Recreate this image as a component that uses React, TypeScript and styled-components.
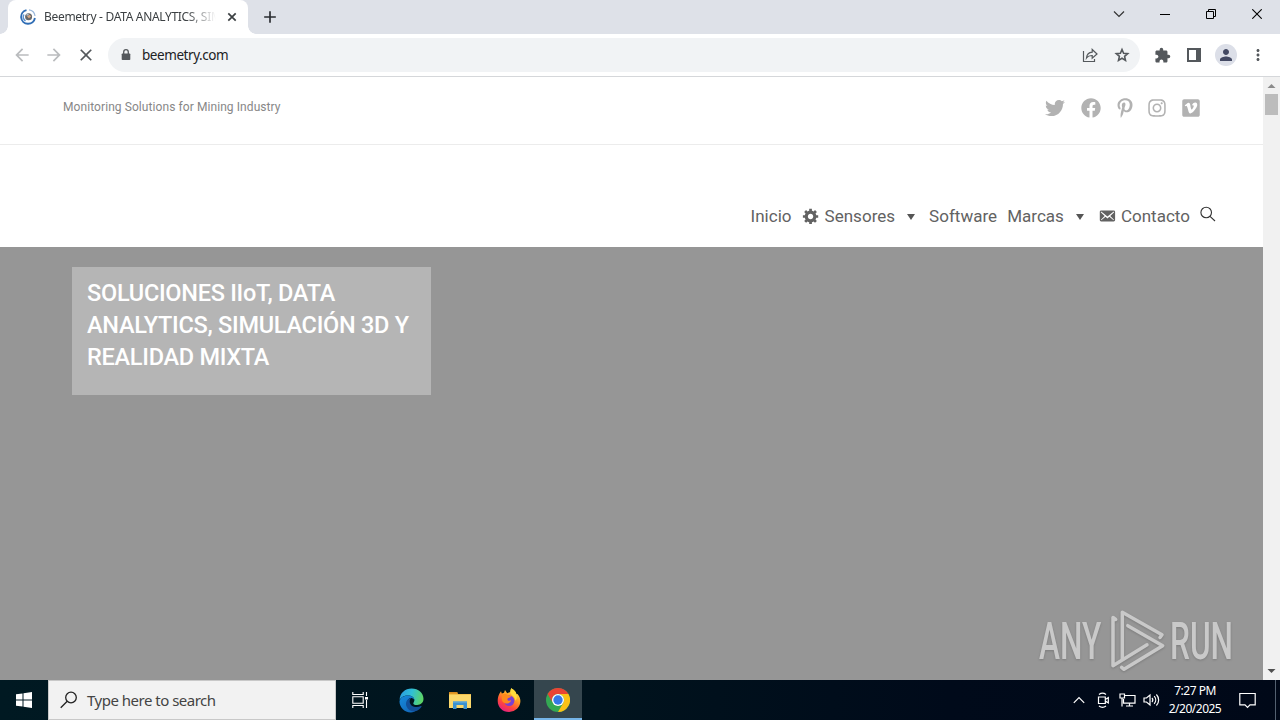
import React from 'react';
import styled, { createGlobalStyle } from 'styled-components';
import { FaTwitter, FaFacebook, FaPinterestP, FaInstagram, FaVimeoSquare } from 'react-icons/fa';
import { MdArrowBack, MdArrowForward, MdClose, MdExtension, MdPerson, MdMoreVert, MdAdd } from 'react-icons/md';

const Global = createGlobalStyle`
  * { box-sizing: border-box; }
  body { margin: 0; width: 1280px; height: 720px; overflow: hidden; background: #fff; }
  svg { display: block; flex: none; }
`;

const Screen = styled.div`
  width: 1280px;
  height: 720px;
  display: flex;
  flex-direction: column;
  overflow: hidden;
  font-family: 'Noto Sans', 'Open Sans', sans-serif;
`;

const TabStrip = styled.header`
  height: 34px;
  flex: none;
  display: flex;
  background: #dee1e8;
  padding-left: 8px;
`;
const Tab = styled.div`
  width: 240px;
  height: 34px;
  display: flex;
  align-items: center;
  padding: 0 9px 0 12px;
  background: #fff;
  border-radius: 8px 8px 0 0;
  position: relative;
  &::before, &::after {
    content: '';
    position: absolute;
    bottom: 0;
    width: 8px;
    height: 8px;
  }
  &::before { left: -8px; background: radial-gradient(circle at 0 0, transparent 7.5px, #fff 8px); }
  &::after { right: -8px; background: radial-gradient(circle at 100% 0, transparent 7.5px, #fff 8px); }
`;
const TabTitle = styled.div`
  width: 178px;
  margin-left: 8px;
  white-space: nowrap;
  font-size: 12px;
  line-height: 18px;
  letter-spacing: -0.31px;
  color: #3c4043;
  mask-image: linear-gradient(90deg, #000 142px, transparent 172px);
`;
const TabClose = styled.div`
  margin-left: auto;
  color: #3c4043;
`;
const NewTab = styled.div`
  display: flex;
  align-items: center;
  margin-left: 12px;
  color: #2a2d31;
`;
const WindowButtons = styled.div`
  display: flex;
  align-items: center;
  height: 28px;
  margin-left: auto;
`;
const WindowButton = styled.div`
  width: 46px;
  display: flex;
  justify-content: center;
`;

const Toolbar = styled.div`
  height: 43px;
  flex: none;
  display: flex;
  align-items: center;
  background: #fff;
  border-bottom: 1px solid #d5d7da;
  padding: 0 6px;
`;
const ToolButton = styled.div<{ $color?: string }>`
  width: 32px;
  display: flex;
  justify-content: center;
  color: ${(p) => p.$color ?? '#54585c'};
`;
const NavButtons = styled.div`
  display: flex;
  flex: none;
  width: 102px;
`;
const AddressBar = styled.div`
  flex: 1;
  height: 34px;
  border-radius: 17px;
  background: #f1f3f5;
  display: flex;
  align-items: center;
  padding: 0 2px 0 13px;
  color: #54585c;
`;
const Address = styled.div`
  flex: 1;
  margin-left: 11px;
  font-size: 13.5px;
  letter-spacing: -0.44px;
  color: #202124;
`;
const ToolActions = styled.div`
  display: flex;
  flex: none;
  align-items: center;
  margin-left: 6px;
`;
const Avatar = styled.div`
  width: 22px;
  height: 22px;
  border-radius: 50%;
  background: #dcdfe8;
  display: flex;
  align-items: center;
  justify-content: center;
  color: #434963;
`;

const Viewport = styled.div`
  height: 603px;
  flex: none;
  display: flex;
`;
const Page = styled.main`
  width: 1263px;
  display: flex;
  flex-direction: column;
  font-family: Roboto, sans-serif;
`;
const TopBar = styled.div`
  height: 68px;
  flex: none;
  display: flex;
  justify-content: space-between;
  padding: 0 63px 0 63px;
  border-bottom: 1px solid #ececec;
`;
const Tagline = styled.div`
  padding-top: 21px;
  font-size: 12px;
  line-height: 18px;
  letter-spacing: 0.08px;
  color: #878787;
`;
const Socials = styled.div`
  display: flex;
  height: 61px;
  align-items: center;
  gap: 16px;
  color: #b2b2b2;
`;
const SocialLink = styled.div<{ $w: number }>`
  width: ${(p) => p.$w}px;
  display: flex;
  justify-content: center;
`;
const MenuBar = styled.nav`
  height: 102px;
  flex: none;
  display: flex;
  justify-content: flex-end;
  padding: 58px 47px 0 0;
`;
const MenuItem = styled.div`
  display: flex;
  align-items: center;
  height: 24px;
  margin-left: 10px;
  padding-top: 1px;
  font-size: 17px;
  letter-spacing: 0.02px;
  color: #626262;
`;
const MenuIcon = styled.svg`
  width: 18px;
  height: 18px;
  margin: 0 5px 0 0;
`;
const Caret = styled.span`
  margin: 2px 4px 0 12px;
  border: 4px solid transparent;
  border-top: 6px solid #555;
  border-bottom: 0;
`;
const SearchIcon = styled.svg`
  margin: 3px 0 0 10px;
`;
const Hero = styled.section`
  flex: 1;
  display: flex;
  flex-direction: column;
  justify-content: space-between;
  background: #969696;
  padding: 20px 31px 8px 72px;
`;
const HeroCard = styled.div`
  width: 359px;
  height: 128px;
  background: #b5b5b5;
  padding: 10px 15px;
`;
const HeroTitle = styled.h2`
  margin: 0;
  font-size: 23.5px;
  letter-spacing: -0.27px;
  font-weight: 500;
  line-height: 32px;
  color: #fff;
  white-space: nowrap;
`;
const Watermark = styled.div`
  align-self: flex-end;
  display: flex;
  align-items: center;
  height: 62px;
  color: #c9c9c9;
  filter: drop-shadow(0 1px 1px rgba(90, 90, 90, 0.45));
`;
const WatermarkWord = styled.div<{ $w: number; $scale: number }>`
  width: ${(p) => p.$w}px;
  font-size: 51px;
  line-height: 64px;
  padding-top: 2px;
  font-weight: 500;
  white-space: nowrap;
  transform: scaleX(${(p) => p.$scale});
  transform-origin: left center;
`;
const Scrollbar = styled.div`
  width: 17px;
  display: flex;
  flex-direction: column;
  align-items: center;
  background: #f1f1f1;
`;
const ScrollArrow = styled.svg`
  width: 17px;
  height: 17px;
`;
const Thumb = styled.div`
  width: 13px;
  height: 21px;
  background: #bcbcbc;
  margin-bottom: auto;
`;

const Taskbar = styled.footer`
  height: 40px;
  flex: none;
  display: flex;
  background: linear-gradient(90deg, #001922 0, #00131d 600px, #000a1a 950px, #000818 1280px);
`;
const TaskSlot = styled.div<{ $active?: boolean; $w?: number }>`
  width: ${(p) => p.$w ?? 49}px;
  height: 40px;
  display: flex;
  align-items: center;
  justify-content: center;
  background: ${(p) => (p.$active ? '#35464e' : 'transparent')};
  border-bottom: ${(p) => (p.$active ? '2px solid #76b5e8' : '0')};
  padding-top: ${(p) => (p.$active ? 2 : 0)}px;
`;
const SearchBox = styled.div`
  width: 288px;
  height: 40px;
  display: flex;
  align-items: center;
  padding-left: 11px;
  background: #f2f2f2;
  border: 1px solid #c8c8c8;
`;
const SearchHint = styled.span`
  margin-left: 9px;
  font-size: 15px;
  letter-spacing: -0.5px;
  color: #444;
`;
const Tray = styled.div`
  display: flex;
  align-items: center;
  margin-left: auto;
  color: #fff;
`;
const TrayIcon = styled.div`
  width: 24px;
  display: flex;
  justify-content: center;
`;
const Clock = styled.div`
  width: 64px;
  text-align: center;
  font-size: 12px;
  line-height: 18px;
  letter-spacing: -0.5px;
  white-space: nowrap;
`;
const ActionCenter = styled.div`
  width: 40px;
  display: flex;
  justify-content: center;
`;
const ShowDesktop = styled.div`
  width: 5px;
  height: 40px;
  margin-left: 8px;
  border-left: 1px solid #536070;
`;

const SiteIcon = () => (
  <svg width="16" height="16" viewBox="0 0 16 16" fill="none">
    <path d="M6.500 1.200A6.900 6.900 0 1 0 14.900 9" stroke="#2f6db5" strokeWidth="1.900" />
    <path d="M9 .9A7 7 0 0 1 15 7" stroke="#9bb9dc" strokeWidth="1.200" />
    <path d="M3.900 5.500A5 5 0 0 0 5.500 12" stroke="#5a91d0" strokeWidth="1.500" />
    <circle cx="8.600" cy="7.700" r="3.500" fill="#66686b" />
    <path d="M7 7.200l2.700-1.500 1.400 1.700-2.200 1.800z" fill="#d8a884" />
    <path d="M6 5.700l2-1 1 1-2 1z" fill="#b9c8d8" />
  </svg>
);

const EdgeIcon = () => (
  <svg width="25" height="25" viewBox="0 0 25 25">
    <defs>
      <linearGradient id="edgeTop" x1="0" x2="1" y1=".2" y2=".4">
        <stop offset="0" stopColor="#299be2" />
        <stop offset=".5" stopColor="#30bfd6" />
        <stop offset="1" stopColor="#5cd465" />
      </linearGradient>
      <linearGradient id="edgeLow" x1="0" x2=".8" y1="0" y2="1">
        <stop offset="0" stopColor="#168bdc" />
        <stop offset="1" stopColor="#1266b8" />
      </linearGradient>
    </defs>
    <path d="M.6 12C.8 5 6 .5 12.6.5 19.5.5 24.5 5.300 24.500 10.800c0 4-3 6.200-6.300 6.200-3 0-4.300-1-3.800-2.100.5-1.100 1-1.600 1-2.900 0-2.700-2.900-4.600-6.400-4.600C5 7.400 1.700 9.500.6 12z" fill="url(#edgeTop)" />
    <path d="M.5 13C1.400 9.600 4.700 7.400 9 7.400c3.500 0 6.400 1.900 6.400 4.600-1-1.300-2.200-1.900-3.600-1.900-2.300 0-3.700 2.300-3.700 4.600 0 4.700 4.500 8 9.800 6.900-1.700 1.900-3.700 2.900-6.100 2.900C5.300 24.500.3 19 .5 13z" fill="url(#edgeLow)" />
    <path d="M11 10.200c-4 1.400-4.600 5.300-3.400 8.300 1.700 4.200 6.100 5.700 9.700 4.500 2.300-.8 4-2.400 5.200-4.300.3-.5-.1-.8-.6-.6-5.200 2.200-11.200.2-11.200-4.700 0-1.300.5-2.300 1.400-3.100z" fill="#124f98" />
  </svg>
);

const ExplorerIcon = () => (
  <svg width="22" height="19" viewBox="0 0 22 19">
    <path d="M0 1h8l1 2h13v14H0z" fill="#e9a82e" />
    <path d="M0 3.500h22V17H0z" fill="#fbd86b" />
    <path d="M0 1h8l1 1.500H0z" fill="#d98c1f" />
    <path d="M4 18v-7.500h14V18h-3.500v-4h-7v4z" fill="#3b92d0" />
    <path d="M4 10.500h14v1.200H4z" fill="#60aadb" />
  </svg>
);

const FirefoxIcon = () => (
  <svg width="24" height="24" viewBox="0 0 24 24">
    <defs>
      <linearGradient id="fox" x1=".8" y1="0" x2=".25" y2="1">
        <stop offset="0" stopColor="#fff04f" />
        <stop offset=".4" stopColor="#ff9a24" />
        <stop offset=".7" stopColor="#ff463c" />
        <stop offset="1" stopColor="#e31c87" />
      </linearGradient>
    </defs>
    <path d="M2.500 5.500L4 3.300l.8 2.200L7 4.800 8 2l2.200 3.300 3-1.300L14.200.3c3.500 1.800 5 4.300 5.200 6L20.500 6c2 2.200 2.900 4.600 2.900 7A11.300 11 0 0 1 12 24C5.500 24 .7 19.200.7 13c0-2.700.6-5.200 1.800-7.500z" fill="url(#fox)" />
    <circle cx="12.200" cy="12.800" r="5.200" fill="#7a3fd4" />
    <path d="M5 7.200c2-1.700 4.500-1.300 5.800.3l3.200.5c0 1.800-3.600 1.700-3.600 3.400 0 1.200 2 1.600 3.800.9-.7 2.700-4.700 4.600-8 2-1.500-1.500-1.700-4.500-1.200-7.100z" fill="#ff8a1c" />
    <path d="M14.200.3c3.500 1.800 5 4.300 5.200 6 1 3 .5 5-1 6.500-.2-3-2-4.800-3.500-5.800C13 5.500 13 2.500 14.200.3z" fill="#ffdb3d" />
  </svg>
);

const ChromeIcon = () => (
  <svg width="24" height="24" viewBox="0 0 24 24">
    <circle cx="12" cy="12" r="12" fill="#34a853" />
    <path d="M1.600 6A12 12 0 0 1 22.400 6H12a6 6 0 0 0-5.200 9z" fill="#e94335" />
    <path d="M22.400 6A12 12 0 0 1 12 24l5.200-9A6 6 0 0 0 12 6z" fill="#fbc116" />
    <circle cx="12" cy="12" r="6" fill="#fff" />
    <circle cx="12" cy="12" r="4.700" fill="#3478e8" />
  </svg>
);

const line = { fill: 'none', stroke: 'currentColor', strokeWidth: 1.2 };

export default function App() {
  return (
    <Screen>
      <Global />
      <TabStrip>
        <Tab>
          <SiteIcon />
          <TabTitle>Beemetry - DATA ANALYTICS, SIM</TabTitle>
          <TabClose>
            <svg width="14" height="14" viewBox="0 0 14 14" stroke="currentColor" strokeWidth="1.7"><path d="M3.300 3.300l7.400 7.400M10.700 3.300l-7.400 7.400" /></svg>
          </TabClose>
        </Tab>
        <NewTab><MdAdd size={20} /></NewTab>
        <WindowButtons>
          <WindowButton>
            <svg width="12" height="12" {...line} stroke="#333"><path d="M1 3.500l5 5 5-5" /></svg>
          </WindowButton>
          <WindowButton><svg width="10" height="12"><path d="M0 6.500h10" stroke="#000" /></svg></WindowButton>
          <WindowButton>
            <svg width="10" height="10" fill="none" stroke="#000"><path d="M.5 2.500h7v7h-7zM2.500 2.500v-2h7v7h-2" /></svg>
          </WindowButton>
          <WindowButton><svg width="10" height="10" stroke="#000" strokeWidth="1.100"><path d="M.3.300l9.400 9.400M9.700.300L.3 9.700" /></svg></WindowButton>
        </WindowButtons>
      </TabStrip>

      <Toolbar>
        <NavButtons>
          <ToolButton $color="#babcbe"><MdArrowBack size={20} /></ToolButton>
          <ToolButton $color="#babcbe"><MdArrowForward size={20} /></ToolButton>
          <ToolButton><MdClose size={20} /></ToolButton>
        </NavButtons>
        <AddressBar>
          <svg width="10" height="12" fill="currentColor"><path d="M1.500 4.500h7q.8 0 .8.800v5q0 .8-.8.800h-7q-.8 0-.8-.8v-5q0-.8.8-.8z" /><path d="M2.700 5V3a2.300 2.300 0 0 1 4.600 0v2" fill="none" stroke="currentColor" strokeWidth="1.300" /></svg>
          <Address>beemetry.com</Address>
          <ToolButton>
            <svg width="16" height="16" {...line}>
              <path d="M1.500 4v10.500h11V12M4.500 11c.4-3.700 2.400-5.500 5.700-5.800V2.500L15 7l-4.800 4.200V8.500C7.500 8.400 5.800 9.200 4.500 11z" />
            </svg>
          </ToolButton>
          <ToolButton>
            <svg width="16" height="16" viewBox="0 0 16 16" fill="none" stroke="currentColor" strokeWidth="1.600">
              <path d="M8 2.500l1.600 3.800 4.100.4-3.100 2.700.9 4L8 11.300l-3.500 2.100.9-4-3.100-2.700 4.100-.4z" />
            </svg>
          </ToolButton>
        </AddressBar>
        <ToolActions>
          <ToolButton><MdExtension size={17} /></ToolButton>
          <ToolButton>
            <svg width="14" height="14"><path d="M1 1h12v12H1z" fill="none" stroke="currentColor" strokeWidth="2" /><path d="M9 0h5v14H9z" fill="currentColor" /></svg>
          </ToolButton>
          <ToolButton><Avatar><MdPerson size={18} /></Avatar></ToolButton>
          <ToolButton><MdMoreVert size={18} /></ToolButton>
        </ToolActions>
      </Toolbar>

      <Viewport>
        <Page>
          <TopBar>
            <Tagline>Monitoring Solutions for Mining Industry</Tagline>
            <Socials>
              <SocialLink $w={20}><FaTwitter size={20} /></SocialLink>
              <SocialLink $w={20}><FaFacebook size={20} /></SocialLink>
              <SocialLink $w={15}><FaPinterestP size={20} /></SocialLink>
              <SocialLink $w={18}><FaInstagram size={20} /></SocialLink>
              <SocialLink $w={18}><FaVimeoSquare size={20} /></SocialLink>
            </Socials>
          </TopBar>
          <MenuBar>
            <MenuItem>Inicio</MenuItem>
            <MenuItem>
              <MenuIcon viewBox="0 0 20 20" fill="currentColor">
                <path d="M18 12h-2.180c-.17.7-.44 1.350-.81 1.930l1.540 1.540-2.100 2.100-1.540-1.540c-.58.36-1.230.63-1.910.79V19H8v-2.180c-.68-.16-1.330-.43-1.910-.79l-1.540 1.540-2.120-2.120 1.540-1.540c-.36-.58-.63-1.230-.79-1.910H1V9.030h2.170c.16-.7.44-1.350.8-1.940L2.430 5.550l2.100-2.100 1.540 1.540c.58-.37 1.240-.64 1.930-.81V2h3v2.180c.68.16 1.330.43 1.910.79l1.540-1.540 2.120 2.120-1.540 1.540c.36.59.64 1.240.8 1.940H18V12zm-8.500 1.500c1.660 0 3-1.340 3-3s-1.340-3-3-3-3 1.340-3 3 1.340 3 3 3z" />
              </MenuIcon>
              Sensores
              <Caret />
            </MenuItem>
            <MenuItem>Software</MenuItem>
            <MenuItem>
              Marcas
              <Caret />
            </MenuItem>
            <MenuItem>
              <MenuIcon viewBox="0 0 20 20" fill="currentColor">
                <path d="M19 14.500v-9c0-.83-.67-1.500-1.500-1.500H3.490c-.83 0-1.500.67-1.500 1.500v9c0 .83.67 1.500 1.500 1.500H17.500c.83 0 1.500-.67 1.500-1.500zm-1.310-9.110c.33.33.15.67-.03.84L13.600 9.950l3.900 4.060c.12.14.2.36.06.51-.13.16-.43.15-.56.05l-4.370-3.730-2.140 1.950-2.130-1.950-4.370 3.730c-.13.1-.43.11-.56-.05-.14-.15-.06-.37.06-.51l3.900-4.060-4.060-3.720c-.18-.17-.36-.51-.03-.84s.67-.17.95.07l6.240 5.040 6.250-5.040c.28-.24.62-.4.95-.07z" />
              </MenuIcon>
              Contacto
            </MenuItem>
            <SearchIcon width="16" height="16" fill="none" stroke="#333" strokeWidth="1.100">
              <circle cx="6.200" cy="6.500" r="5.300" />
              <path d="M10 10.300l5 4.700" />
            </SearchIcon>
          </MenuBar>
          <Hero>
            <HeroCard>
              <HeroTitle>
                SOLUCIONES IIoT, DATA
                <br />
                ANALYTICS, SIMULACIÓN 3D Y
                <br />
                REALIDAD MIXTA
              </HeroTitle>
            </HeroCard>
            <Watermark>
              <WatermarkWord $w={71} $scale={0.62}>ANY</WatermarkWord>
              <svg width="60" height="62" viewBox="1 0 60 62" fill="none" stroke="currentColor" strokeWidth="3.500" strokeLinejoin="round" strokeLinecap="round">
                <path d="M6.700 9.500L4 7.500v48.200L38 34.800" />
                <path d="M13.300 49V2.300L53 24.700 51 27.500" />
                <path d="M18.800 15.700L53.700 35.700 15 59.300 12.600 57.300" />
              </svg>
              <WatermarkWord $w={62} $scale={0.62}>RUN</WatermarkWord>
            </Watermark>
          </Hero>
        </Page>
        <Scrollbar>
          <ScrollArrow viewBox="0 0 17 17"><path d="M4.500 11L8.500 7l4 4z" fill="#8b8b8b" /></ScrollArrow>
          <Thumb />
          <ScrollArrow viewBox="0 0 17 17"><path d="M4.500 6l4 4 4-4z" fill="#505050" /></ScrollArrow>
        </Scrollbar>
      </Viewport>

      <Taskbar>
        <TaskSlot $w={48}>
          <svg width="16" height="16" fill="#fff"><path d="M0 2.300l6.500-.9v6.100H0zM7.500 1.200L16 0v7.500H7.500zM0 8.500h6.500v6.100L0 13.700zM7.500 8.500H16V16l-8.500-1.200z" /></svg>
        </TaskSlot>
        <SearchBox>
          <svg width="18" height="18" fill="none" stroke="#222" strokeWidth="1.300"><circle cx="11" cy="6.500" r="5.300" /><path d="M7.200 10.300L.7 16.800" /></svg>
          <SearchHint>Type here to search</SearchHint>
        </SearchBox>
        <TaskSlot>
          <svg width="17" height="16" fill="none" stroke="#fff" strokeWidth="1.100">
            <path d="M.8 0v2.500h10.400V0M.8 16v-2.500h10.400V16M.8 4.800h10.400v6.500H.8zM14.500 0v4M14.500 8v8" />
            <path d="M13 5h3v2.500h-3z" fill="#fff" stroke="none" />
          </svg>
        </TaskSlot>
        <TaskSlot $w={52}><EdgeIcon /></TaskSlot>
        <TaskSlot $w={46}><ExplorerIcon /></TaskSlot>
        <TaskSlot $w={51}><FirefoxIcon /></TaskSlot>
        <TaskSlot $w={48} $active><ChromeIcon /></TaskSlot>
        <Tray>
          <TrayIcon><svg width="12" height="8" {...line}><path d="M.8 6.800L6 1.500l5.200 5.300" /></svg></TrayIcon>
          <TrayIcon>
            <svg width="14" height="16" {...line}><path d="M2.500 5h6.800v6.500H2.500zM9.300 7.500l3-2v5.500l-3-2M3 2.500c2-1.500 5-1.500 7 0M3 14c2 1.500 5 1.500 7 0" /></svg>
          </TrayIcon>
          <TrayIcon>
            <svg width="17" height="14" {...line}><path d="M6 2.500h10v7.700H4.500V6M7 13h7M10.500 10v3M1 1h4.500v4H1zM3 5v8.500" /></svg>
          </TrayIcon>
          <TrayIcon>
            <svg width="17" height="14" {...line}><path d="M1 5h2.500L7 2v10L3.500 9H1zM9 5c1 1.200 1 2.800 0 4M11.200 3.200c2 2.200 2 5.400 0 7.600M13.400 1.500c3 3.200 3 7.800 0 11" /></svg>
          </TrayIcon>
          <Clock>
            7:27 PM
            <br />
            2/20/2025
          </Clock>
          <ActionCenter>
            <svg width="17" height="17" {...line}><path d="M.8 1.500h15.400v11.300H11l-2.500 2.500L6 12.800H.8z" /></svg>
          </ActionCenter>
          <ShowDesktop />
        </Tray>
      </Taskbar>
    </Screen>
  );
}
